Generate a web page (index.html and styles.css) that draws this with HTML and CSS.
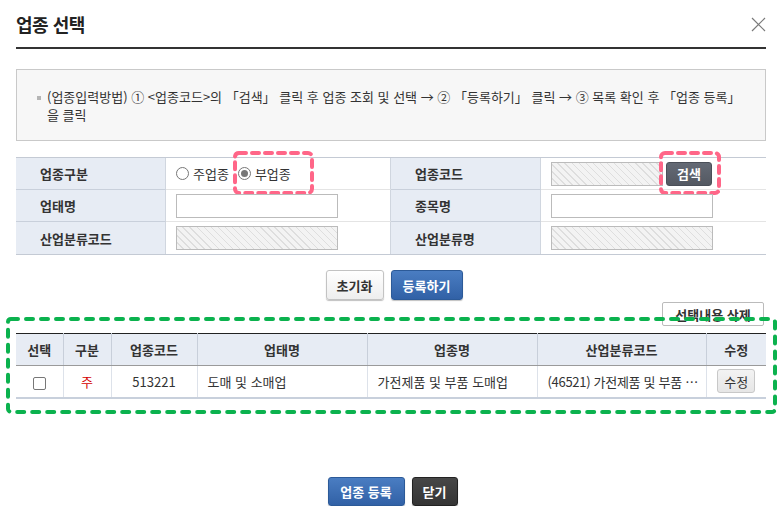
FILE: index.html
```html
<!DOCTYPE html>
<html lang="ko">
<head>
<meta charset="utf-8">
<title>업종 선택</title>
<link rel="stylesheet" href="styles.css">
</head>
<body>
<div class="modal">
  <div class="header">
    <h1 class="title">업종 선택</h1>
    <svg class="close" width="15" height="15" viewBox="0 0 15 15"><path d="M1 1 L14 14 M14 1 L1 14" stroke="#7a7a7a" stroke-width="1.2" fill="none"/></svg>
  </div>

  <div class="info">
    <span class="bullet"></span>
    <p class="info-text">(업종입력방법) ① &lt;업종코드&gt;의 「검색」 클릭 후 업종 조회 및 선택 → ② 「등록하기」 클릭 → ③ 목록 확인 후 「업종 등록」<br>을 클릭</p>
  </div>

  <div class="form">
    <div class="lbl">업종구분</div>
    <div class="val">
      <label class="radio"><span class="rb"></span>주업종</label>
      <label class="radio"><span class="rb on"></span>부업종</label>
      <svg class="mark mark-radio" width="81" height="44" viewBox="0 0 81 44"><rect x="2" y="2" width="77" height="40" rx="4" fill="none" stroke="#ff6688" stroke-width="4" stroke-dasharray="7 6" stroke-linecap="round"/></svg>
    </div>
    <div class="lbl">업종코드</div>
    <div class="val">
      <span class="inp hatch short"></span>
      <button class="btn-search">검색</button>
      <svg class="mark mark-search" width="62" height="44" viewBox="0 0 62 44"><rect x="2" y="2" width="58" height="40" rx="4" fill="none" stroke="#ff6688" stroke-width="4" stroke-dasharray="7 6" stroke-linecap="round"/></svg>
    </div>

    <div class="lbl">업태명</div>
    <div class="val"><span class="inp"></span></div>
    <div class="lbl">종목명</div>
    <div class="val"><span class="inp"></span></div>

    <div class="lbl">산업분류코드</div>
    <div class="val"><span class="inp hatch"></span></div>
    <div class="lbl">산업분류명</div>
    <div class="val"><span class="inp hatch"></span></div>
  </div>

  <div class="actions">
    <button class="btn btn-light">초기화</button>
    <button class="btn btn-blue">등록하기</button>
  </div>

  <div class="list">
    <div class="list-tools"><button class="btn-del">선택내용 삭제</button></div>
    <table class="grid">
      <colgroup>
        <col style="width:47px"><col style="width:48px"><col style="width:86px"><col style="width:170px"><col style="width:170px"><col style="width:169px"><col style="width:60px">
      </colgroup>
      <thead>
        <tr><th>선택</th><th>구분</th><th>업종코드</th><th>업태명</th><th>업종명</th><th>산업분류코드</th><th>수정</th></tr>
      </thead>
      <tbody>
        <tr>
          <td class="c"><span class="chk"></span></td>
          <td class="c red">주</td>
          <td class="c">513221</td>
          <td>도매 및 소매업</td>
          <td>가전제품 및 부품 도매업</td>
          <td class="ell">(46521) 가전제품 및 부품 도매업</td>
          <td class="c"><button class="btn-edit">수정</button></td>
        </tr>
      </tbody>
    </table>
    <svg class="mark mark-list" width="771" height="97" viewBox="0 0 771 97"><rect x="2" y="2" width="767" height="93" rx="3" fill="none" stroke="#0bb24e" stroke-width="4" stroke-dasharray="7 8" stroke-linecap="round"/></svg>
  </div>

  <div class="footer">
    <button class="btn btn-blue btn-foot">업종 등록</button>
    <button class="btn btn-dark btn-foot">닫기</button>
  </div>
</div>
</body>
</html>
```

FILE: styles.css
```css
* { box-sizing: border-box; }
html, body { margin: 0; padding: 0; background: #fff; }
body {
  font-family: "Noto Sans CJK KR", "Noto Sans", sans-serif;
  color: #333;
  font-size: 12px;
}
button { font-family: inherit; cursor: pointer; padding: 0; }

.modal { width: 750px; margin-left: 16px; }

.header {
  display: flex;
  justify-content: space-between;
  align-items: flex-start;
  padding-top: 12px;
  height: 49px;
  border-bottom: 2px solid #333;
}
.title {
  margin: 0;
  font-size: 18px;
  line-height: 24px;
  font-weight: 700;
  color: #222;
  letter-spacing: -0.5px;
}
.close { margin-top: 5px; }

.info {
  margin-top: 20px;
  height: 72px;
  border: 1px solid #c9c9c9;
  background: #f7f7f7;
  display: flex;
  align-items: flex-start;
  padding: 18px 10px 0 20px;
}
.bullet {
  width: 4px; height: 4px; background: #b5b5b5;
  margin-top: 8px; margin-right: 6px; flex: none;
}
.info-text { margin: 0; font-size: 13px; line-height: 18px; color: #333; letter-spacing: 0; white-space: nowrap; }

.form {
  margin-top: 16px;
  display: grid;
  grid-template-columns: 150px 225px 150px 225px;
  grid-auto-rows: 32px;
  border-top: 1px solid #c4cad4;
  border-bottom: 1px solid #c4cad4;
}
.lbl {
  background: #e7ecf4;
  border-right: 1px solid #d0d6df;
  border-bottom: 1px solid #c9d0db;
  font-size: 13px;
  font-weight: 700;
  color: #333;
  padding-left: 24px;
  display: flex; align-items: center;
}
.val {
  position: relative;
  border-bottom: 1px solid #e4e4e4;
  padding-left: 10px;
  display: flex; align-items: center;
  font-size: 13px;
}
.form > :nth-last-child(-n+4) { border-bottom: none; }
.form > .val:nth-child(2), .form > .val:nth-child(6), .form > .val:nth-child(10) { border-right: 1px solid #d0d6df; }

.radio { display: inline-flex; align-items: center; margin-right: 9px; color: #333; }
.rb {
  width: 13px; height: 13px; border-radius: 50%;
  border: 1px solid #777; background: #fff; margin-right: 4px;
  display: inline-flex; align-items: center; justify-content: center;
}
.rb.on::after { content: ""; width: 7px; height: 7px; border-radius: 50%; background: #777; }

.inp {
  display: block; width: 162px; height: 24px;
  border: 1px solid #bbb; background: #fff;
}
.hatch {
  background: repeating-linear-gradient(45deg, #f3f3f3 0 4px, #dedede 4px 5px);
}
.inp.short { width: 112px; }
.btn-search {
  margin-left: 3px;
  width: 46px; height: 24px;
  border: 1px solid #4a4f58; border-radius: 3px;
  background: linear-gradient(#646a75, #545962);
  color: #fff; font-size: 13px; font-weight: 700;
}

.mark { position: absolute; pointer-events: none; }
.mark-radio { left: 67px; top: -7px; }
.mark-search { left: 118px; top: -7px; }

.actions {
  display: flex; justify-content: center; gap: 7px;
  margin-top: 15px;
  padding-left: 6px;
}
.btn {
  height: 30px; border-radius: 3px;
  font-size: 13px; font-weight: 700;
}
.btn-light {
  width: 58px;
  border: 1px solid #c3c3c3;
  background: linear-gradient(#ffffff, #eeeeee);
  color: #333;
  box-shadow: 0 1px 1px rgba(0,0,0,.25);
}
.btn-blue {
  width: 72px;
  border: 1px solid #2c5a98;
  background: linear-gradient(#4a7dc2, #3161a6);
  color: #fff;
  box-shadow: 0 1px 1px rgba(0,0,0,.25);
}
.btn-dark {
  border: 1px solid #222;
  background: linear-gradient(#474747, #353535);
  color: #fff;
  box-shadow: 0 1px 1px rgba(0,0,0,.3);
}

.list { position: relative; margin-top: 2px; }
.list-tools { display: flex; justify-content: flex-end; padding-right: 2px; }
.btn-del {
  width: 102px; height: 24px;
  border: 1px solid #bbb; border-radius: 2px;
  background: #fff; color: #333;
  font-size: 13px; font-weight: 700;
}
.grid {
  margin-top: 7px;
  width: 750px;
  border-collapse: collapse;
  table-layout: fixed;
  border-top: 1px solid #222;
  border-bottom: 2px solid #c8d0dc;
}
.grid th {
  height: 32px;
  background: #e7ecf4;
  font-size: 13px; font-weight: 700; color: #333;
  border-left: 1px solid #c8cfda;
  border-bottom: 1px solid #9a9a9a;
  padding: 0;
}
.grid td {
  height: 32px;
  font-size: 13px; color: #333;
  border-left: 1px solid #dde2ea;
  padding: 0 10px;
  white-space: nowrap;
}
.grid th:first-child, .grid td:first-child { border-left: none; }
.grid td.c { text-align: center; padding: 0; }
.grid td.red { color: #d40000; }
.grid td.ell { overflow: hidden; text-overflow: ellipsis; padding: 0 4px 0 10px; letter-spacing: -0.3px; }
.chk {
  display: inline-block; vertical-align: middle;
  width: 13px; height: 13px; border: 1px solid #777; border-radius: 2px; background: #fff;
}
.btn-edit {
  width: 38px; height: 24px;
  border: 1px solid #c8c8c8; border-radius: 3px;
  background: linear-gradient(#f3f3f3, #e6e6e6);
  color: #333; font-size: 13px;
}
.mark-list { left: -10px; top: 15px; }

.footer {
  display: flex; justify-content: center; gap: 7px;
  margin-top: 78px;
  padding-left: 3px;
}
.btn-foot { height: 29px; }
.btn-foot.btn-blue { width: 77px; }
.btn-foot.btn-dark { width: 46px; }
```
